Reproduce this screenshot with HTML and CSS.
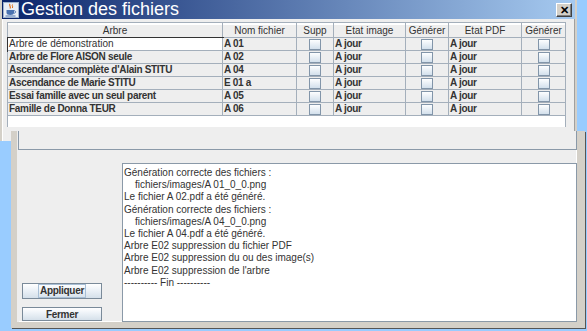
FILE: index.html
```html
<!DOCTYPE html>
<html lang="fr">
<head>
<meta charset="utf-8">
<title>Gestion des fichiers</title>
<link rel="stylesheet" href="styles.css">
</head>
<body>
<div class="desktop">
  <div class="win win-top">
    <div class="titlebar">
      <svg class="appicon" width="16" height="16" viewBox="0 0 16 16">
        <rect x="0.5" y="0.5" width="15" height="15" fill="#e9eef6" stroke="#9fb2cc"/>
        <path d="M7 2 C5.5 3.5 8.5 4.5 7 6.5" fill="none" stroke="#e0701a" stroke-width="1.2"/>
        <path d="M9.5 2.5 C8.5 3.5 10.5 4.5 9.3 6" fill="none" stroke="#e0701a" stroke-width="1"/>
        <path d="M3.5 8 H11 V10.5 C11 12.3 9.5 13 7.3 13 C5 13 3.5 12.3 3.5 10.5 Z" fill="#4a72b0"/>
        <path d="M11 8.7 C13.2 8.7 13.2 11.2 11 11.2" fill="none" stroke="#4a72b0" stroke-width="1"/>
        <path d="M2.5 14 H12.5" stroke="#4a72b0" stroke-width="1"/>
      </svg>
      <span class="title">Gestion des fichiers</span>
      <span class="closebtn">✕</span>
    </div>
    <div class="content">
      <div class="scrollpane">
        <div class="grid">
          <div class="hc">Arbre</div>
          <div class="hc">Nom fichier</div>
          <div class="hc">Supp</div>
          <div class="hc">Etat image</div>
          <div class="hc">Générer</div>
          <div class="hc">Etat PDF</div>
          <div class="hc last">Générer</div>

          <div class="c editing">Arbre de démonstration</div>
          <div class="c">A 01</div>
          <div class="c ck"><span class="cb"></span></div>
          <div class="c">A jour</div>
          <div class="c ck"><span class="cb"></span></div>
          <div class="c">A jour</div>
          <div class="c ck last"><span class="cb"></span></div>

          <div class="c">Arbre de Flore AISON seule</div>
          <div class="c">A 02</div>
          <div class="c ck"><span class="cb"></span></div>
          <div class="c">A jour</div>
          <div class="c ck"><span class="cb"></span></div>
          <div class="c">A jour</div>
          <div class="c ck last"><span class="cb"></span></div>

          <div class="c">Ascendance complète d'Alain STITU</div>
          <div class="c">A 04</div>
          <div class="c ck"><span class="cb"></span></div>
          <div class="c">A jour</div>
          <div class="c ck"><span class="cb"></span></div>
          <div class="c">A jour</div>
          <div class="c ck last"><span class="cb"></span></div>

          <div class="c">Ascendance de Marie STITU</div>
          <div class="c">E 01 a</div>
          <div class="c ck"><span class="cb"></span></div>
          <div class="c">A jour</div>
          <div class="c ck"><span class="cb"></span></div>
          <div class="c">A jour</div>
          <div class="c ck last"><span class="cb"></span></div>

          <div class="c">Essai famille avec un seul parent</div>
          <div class="c">A 05</div>
          <div class="c ck"><span class="cb"></span></div>
          <div class="c">A jour</div>
          <div class="c ck"><span class="cb"></span></div>
          <div class="c">A jour</div>
          <div class="c ck last"><span class="cb"></span></div>

          <div class="c">Famille de Donna TEUR</div>
          <div class="c">A 06</div>
          <div class="c ck"><span class="cb"></span></div>
          <div class="c">A jour</div>
          <div class="c ck"><span class="cb"></span></div>
          <div class="c">A jour</div>
          <div class="c ck last"><span class="cb"></span></div>
        </div>
      </div>
    </div>
  </div>

  <div class="win win-bottom">
    <div class="clipbox"></div>
    <div class="lower">
      <div class="buttons">
        <div class="btn btn-apply"><span class="focus">Appliquer</span></div>
        <div class="btn btn-close">Fermer</div>
      </div>
      <div class="log">
        <div class="line">Génération correcte des fichiers :</div>
        <div class="line indent">fichiers/images/A 01_0_0.png</div>
        <div class="line">Le fichier A 02.pdf a été généré.</div>
        <div class="line">Génération correcte des fichiers :</div>
        <div class="line indent">fichiers/images/A 04_0_0.png</div>
        <div class="line">Le fichier A 04.pdf a été généré.</div>
        <div class="line">Arbre E02 suppression du fichier PDF</div>
        <div class="line">Arbre E02 suppression du ou des image(s)</div>
        <div class="line">Arbre E02 suppression de l'arbre</div>
        <div class="line">---------- Fin ----------</div>
      </div>
    </div>
  </div>
</div>
</body>
</html>
```

FILE: styles.css
```css
html, body {
  margin: 0;
  padding: 0;
}

body {
  background: #99ccff;
  font-family: "Liberation Sans", Arial, sans-serif;
  color: #333333;
}

.desktop {
  position: relative;
  width: 587px;
  height: 331px;
  overflow: hidden;
  background: #99ccff;
}

.win {
  position: absolute;
  box-sizing: border-box;
  background: #eeeeee;
}

/* ---------- top window ---------- */
.win-top {
  left: 0;
  top: 0;
  width: 577px;
  height: 141px;
  border-left: 2px solid #d4d0c8;
  border-right: 2px solid #d4d0c8;
  box-shadow: inset 1px 0 0 #ffffff, inset -1px 0 0 #a0a0a0;
}

.titlebar {
  display: flex;
  align-items: center;
  height: 19px;
  background: linear-gradient(to right, #0a246a, #a6caf0);
  padding-left: 1px;
  padding-right: 3px;
}

.appicon {
  flex: none;
  display: block;
}

.title {
  margin-left: 2px;
  color: #ffffff;
  font-size: 18px;
  line-height: 19px;
  white-space: nowrap;
  flex: 1;
}

.closebtn {
  flex: none;
  box-sizing: border-box;
  width: 16px;
  height: 14px;
  background: #d4d0c8;
  border: 1px solid;
  border-color: #ffffff #404040 #404040 #ffffff;
  box-shadow: inset -1px -1px 0 #808080;
  font-size: 11px;
  font-weight: bold;
  line-height: 12px;
  text-align: center;
  color: #000000;
}

.content {
  padding: 3px 0 0 5px;
}

.scrollpane {
  box-sizing: border-box;
  width: 559px;
  height: 105px;
  background: #ffffff;
  border: 1px solid #a4afbb;
  border-bottom: none;
}

.grid {
  display: grid;
  grid-template-columns: 215px 74px 37px 72px 43px 73px 43px;
  grid-auto-rows: 13px;
  grid-template-rows: 15px;
}

.hc {
  box-sizing: border-box;
  background: #eeeeee;
  border-right: 1px solid #a4afbb;
  border-bottom: 1px solid #a4afbb;
  box-shadow: inset 0 2px 0 #ffffff;
  font-size: 10px;
  line-height: 15px;
  text-align: center;
  white-space: nowrap;
  overflow: hidden;
  color: #333333;
}

.c {
  box-sizing: border-box;
  background: #eeeeee;
  border-right: 1px solid #a4afbb;
  border-bottom: 1px solid #a4afbb;
  font-size: 10px;
  font-weight: bold;
  letter-spacing: -0.3px;
  line-height: 12px;
  padding-left: 1px;
  white-space: nowrap;
  overflow: hidden;
  color: #333333;
}

.last {
  border-right: none;
}

.c.editing {
  background: #ffffff;
  font-weight: normal;
  letter-spacing: 0;
  outline: 1px solid #333333;
  outline-offset: 0;
}

.c.ck {
  display: flex;
  align-items: center;
  justify-content: center;
  padding-left: 0;
}

.cb {
  box-sizing: border-box;
  width: 12px;
  height: 11px;
  border: 1px solid #8295a9;
  background: linear-gradient(#fdfeff, #d3e0ec);
}

/* ---------- bottom window ---------- */
.win-bottom {
  left: 11px;
  top: 131px;
  width: 574px;
  height: 197px;
  border-left: 6px solid #d4d0c8;
  border-right: 8px solid #d4d0c8;
  border-bottom: 6px solid #d4d0c8;
  box-shadow:
    inset 2px 0 0 #eeeeee,
    inset -1px -1px 0 #ffffff,
    1px 1px 0 #555555;
  display: flex;
  flex-direction: column;
}

.clipbox {
  box-sizing: border-box;
  margin-left: 1px;
  width: 559px;
  height: 19px;
  border-left: 1px solid #8a99a8;
  border-right: 1px solid #8a99a8;
  border-bottom: 1px solid #8a99a8;
  flex: none;
}

.lower {
  display: flex;
  margin-top: 13px;
  height: 159px;
  flex: none;
}

.buttons {
  width: 105px;
  flex: none;
  display: flex;
  flex-direction: column;
  justify-content: flex-end;
  align-items: flex-start;
  padding-left: 5px;
  padding-bottom: 1px;
  box-sizing: border-box;
  gap: 8px;
}

.btn {
  box-sizing: border-box;
  width: 80px;
  border: 1px solid #7a8a99;
  background: linear-gradient(#ffffff, #eef3f8 40%, #d5e0ea);
  font-size: 10px;
  font-weight: bold;
  letter-spacing: -0.3px;
  color: #333333;
  text-align: center;
  display: flex;
  align-items: center;
  justify-content: center;
}

.btn-apply {
  height: 16px;
}

.btn-close {
  height: 14px;
}

.focus {
  box-sizing: border-box;
  padding: 0 1px;
  line-height: 12px;
  border: 1px solid #a8bfd6;
}

.log {
  box-sizing: border-box;
  width: 455px;
  height: 159px;
  background: #ffffff;
  border: 1px solid #8a99a8;
  padding: 3px 1px 0 1px;
  font-size: 10px;
  line-height: 12.2px;
  color: #333333;
}

.line {
  white-space: nowrap;
}

.line.indent {
  padding-left: 11px;
}
```
